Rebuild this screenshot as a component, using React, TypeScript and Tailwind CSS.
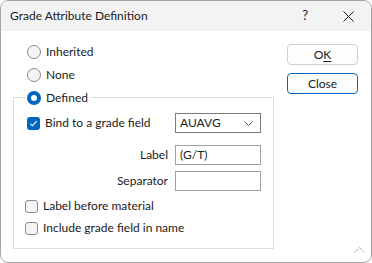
import React from 'react';

const font = { fontFamily: 'Lato, "Noto Sans", sans-serif' };

function Radio({ checked, label }: { checked?: boolean; label: string }) {
  return (
    <div className="flex h-[23px] items-center">
      {checked ? (
        <span className="flex h-[14px] w-[14px] items-center justify-center rounded-full bg-[#0067c0]">
          <span className="h-[6px] w-[6px] rounded-full bg-white" />
        </span>
      ) : (
        <span className="h-[14px] w-[14px] rounded-full border border-[#8a8a8a] bg-[#f4f4f4]" />
      )}
      <span className="ml-[5px] text-[12px] leading-none text-[#1b1b1b]">{label}</span>
    </div>
  );
}

function Check({ checked, label }: { checked?: boolean; label: string }) {
  return (
    <div className="flex items-center">
      {checked ? (
        <span className="flex h-[13px] w-[13px] items-center justify-center rounded-[3px] bg-[#0067c0]">
          <svg width="9" height="9" viewBox="0 0 9 9" fill="none">
            <path d="M1.5 4.8 L3.5 6.8 L7.6 2.2" stroke="white" strokeWidth="1.1" />
          </svg>
        </span>
      ) : (
        <span className="h-[13px] w-[13px] rounded-[3px] border border-[#8a8a8a] bg-[#f4f4f4]" />
      )}
      <span className="ml-[5px] text-[12px] leading-none text-[#1b1b1b]">{label}</span>
    </div>
  );
}

export default function App() {
  return (
    <div
      className="flex h-[263px] w-[372px] flex-col overflow-hidden rounded-[8px] border border-[#a6a6a6] bg-white"
      style={font}
    >
      {/* Title bar */}
      <div className="flex h-[30px] shrink-0 items-center bg-[#f3f3f3] text-[12px] text-[#1b1b1b]">
        <span className="ml-[9px]">Grade Attribute Definition</span>
        <span className="ml-auto text-[13px]">?</span>
        <span className="ml-[35px] mr-[17px] flex">
          <svg width="11" height="11" viewBox="0 0 11 11">
            <path d="M0.5 0.5 L10.5 10.5 M10.5 0.5 L0.5 10.5" stroke="#1b1b1b" strokeWidth="1" />
          </svg>
        </span>
      </div>

      <div className="relative flex flex-1">
        {/* Left column */}
        <div className="w-[286px] pt-[9px]">
          <div className="pl-[26px]">
            <Radio label="Inherited" />
            <Radio label="None" />
          </div>
          <fieldset className="ml-[12px] w-[261px] border border-[#dcdcdc] pb-[9px]">
            <legend className="ml-[12px] px-[1px]">
              <div className="pr-[2px]">
                <Radio checked label="Defined" />
              </div>
            </legend>
            <div className="mt-[4px] flex h-[20px] items-center">
              <div className="w-[161px] pl-[13px]">
                <Check checked label="Bind to a grade field" />
              </div>
              <div className="flex h-[20px] w-[86px] items-center border border-[#7a7a7a] pl-[4px] pr-[7px] text-[12px] text-[#1b1b1b]">
                <span>AUAVG</span>
                <svg className="ml-auto" width="9" height="5" viewBox="0 0 9 5">
                  <path d="M0.5 0.5 L4.5 4.5 L8.5 0.5" stroke="#555" strokeWidth="1" fill="none" />
                </svg>
              </div>
            </div>
            <div className="mt-[12px] flex h-[20px] items-center">
              <span className="w-[154px] text-right text-[12px] text-[#1b1b1b]">Label</span>
              <div className="ml-[7px] flex h-[20px] w-[86px] items-center border border-[#a0a0a0] pl-[4px] text-[12px] text-[#1b1b1b]">
                (G/T)
              </div>
            </div>
            <div className="mt-[6px] flex h-[20px] items-center">
              <span className="w-[154px] text-right text-[12px] text-[#1b1b1b]">Separator</span>
              <div className="ml-[7px] h-[20px] w-[86px] border border-[#a0a0a0]" />
            </div>
            <div className="mt-[4px] flex h-[22px] items-center pl-[11px]">
              <Check label="Label before material" />
            </div>
            <div className="flex h-[22px] items-center pl-[11px]">
              <Check label="Include grade field in name" />
            </div>
          </fieldset>
        </div>

        {/* Right column */}
        <div className="flex flex-col gap-[8px] pt-[13px]">
          <button className="flex h-[21px] w-[71px] items-center justify-center rounded-[4px] border border-[#d0d0d0] bg-[#fdfdfd] text-[12px] text-[#1b1b1b]">
            O<span className="underline underline-offset-2">K</span>
          </button>
          <button className="flex h-[21px] w-[71px] items-center justify-center rounded-[4px] border border-[#0067c0] bg-[#fdfdfd] text-[12px] text-[#1b1b1b]">
            Close
          </button>
        </div>

        {/* Resize grip */}
        <svg className="absolute bottom-[9px] right-[6px]" width="11" height="6" viewBox="0 0 11 6">
          <path d="M0.5 5.5 L5.5 0.5 L10.5 5.5" stroke="#777" strokeWidth="1" strokeDasharray="1 1" fill="none" />
        </svg>
      </div>
    </div>
  );
}
